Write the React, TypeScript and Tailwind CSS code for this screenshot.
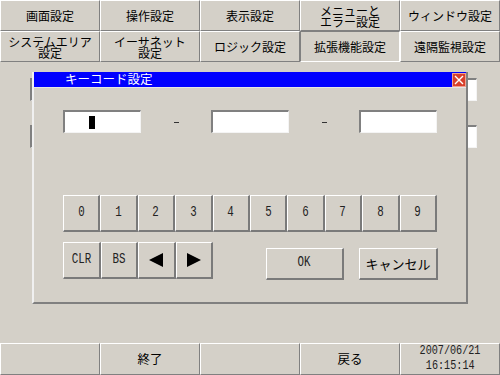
const jp = { fontFamily: '"Noto Sans CJK JP", "Noto Sans", sans-serif' };
const mono = { fontFamily: '"Liberation Mono", "DejaVu Sans Mono", monospace' };

const raised =
  "border border-t-white border-l-white border-r-[#808080] border-b-[#808080]";
const keyRaised =
  "border-t border-l border-b-2 border-r-2 border-t-white border-l-white border-r-[#7a7a7a] border-b-[#7a7a7a]";
const sunken =
  "border-t-2 border-l-2 border-b border-r border-t-[#808080] border-l-[#808080] border-b-[#f4f4f4] border-r-[#f4f4f4]";

const tabs1 = ["画面設定", "操作設定", "表示設定", "メニューと\nエラー設定", "ウィンドウ設定"];
const tabs2 = ["システムエリア\n設定", "イーサネット\n設定", "ロジック設定", "拡張機能設定", "遠隔監視設定"];

const Tab = ({ label, active }: { label: string; active?: boolean }) => (
  <div
    className={
      "flex items-center justify-center text-center whitespace-pre-line text-[12px] leading-[11px] text-black " +
      (active
        ? "border border-t-[#808080] border-l-[#808080] border-r-white border-b-white"
        : raised)
    }
    style={jp}
  >
    {label}
  </div>
);

const Digit = ({ children }: { children: React.ReactNode }) => (
  <span className="inline-block scale-x-[0.72] text-[15px] text-[#222]" style={mono}>
    {children}
  </span>
);

const Key = ({ children }: { children: React.ReactNode }) => (
  <div className={"flex items-center justify-center bg-[#d4d0c8] text-black " + keyRaised}>
    {children}
  </div>
);

const Tri = ({ dir }: { dir: "l" | "r" }) => (
  <svg width="14" height="14" viewBox="0 0 14 14">
    {dir === "l" ? (
      <polygon points="0,7 14,0 14,14" fill="#000" />
    ) : (
      <polygon points="14,7 0,0 0,14" fill="#000" />
    )}
  </svg>
);

const InputBox = ({ cursor }: { cursor?: boolean }) => (
  <div className={"w-[78px] h-[23px] bg-white flex items-center pl-[24px] " + sunken}>
    {cursor && <div className="w-[6px] h-[13px] bg-black" />}
  </div>
);

export default function App() {
  return (
    <div className="w-[500px] h-[375px] bg-[#d4d0c8] flex flex-col overflow-hidden select-none">
      {/* tabs */}
      <div className="grid grid-cols-5 grid-rows-[31px_31px]">
        {tabs1.map((t) => (
          <Tab key={t} label={t} />
        ))}
        {tabs2.map((t) => (
          <Tab key={t} label={t} active={t === "拡張機能設定"} />
        ))}
      </div>

      {/* content */}
      <div className="relative flex-1">
        <div className="flex flex-col gap-[24px] pt-[16px] pl-[30px] pr-[23px]">
          <div className={"h-[23px] bg-white " + sunken} />
          <div className={"h-[23px] bg-white " + sunken} />
        </div>

        {/* dialog */}
        <div className="absolute left-[32px] top-[10px] w-[436px] h-[232px] bg-[#d4d0c8] border-l-2 border-l-[#f0f0f0] border-r-2 border-r-[#808080] border-b-2 border-b-[#808080] flex flex-col">
          <div className="h-[16px] bg-[#0000ff] flex items-center justify-between border-b border-b-[#e6e6e6]">
            <span className="pl-[31px] text-white text-[12.5px] leading-none" style={jp}>
              キーコード設定
            </span>
            <div className="w-[14px] h-[14px] bg-[#d8402c] border border-[#f0a090] flex items-center justify-center">
              <svg width="10" height="10" viewBox="0 0 10 10">
                <path d="M1 1 L9 9 M9 1 L1 9" stroke="#fff" strokeWidth="1.4" />
              </svg>
            </div>
          </div>

          <div className="pl-[29px] pt-[22px]">
            <div className="flex items-center w-[374px]">
              <InputBox cursor />
              <div className="flex-1 flex justify-center">
                <div className="w-[5px] h-[1px] bg-[#333] mt-[1px]" />
              </div>
              <InputBox />
              <div className="flex-1 flex justify-center">
                <div className="w-[5px] h-[1px] bg-[#333] mt-[1px]" />
              </div>
              <InputBox />
            </div>

            <div className="grid grid-cols-10 w-[374px] h-[37px] mt-[62px]">
              {["0", "1", "2", "3", "4", "5", "6", "7", "8", "9"].map((d) => (
                <Key key={d}>
                  <Digit>{d}</Digit>
                </Key>
              ))}
            </div>

            <div className="flex w-[375px] mt-[10px]">
              <div className="grid grid-cols-4 w-[150px] h-[37px]">
                <Key>
                  <Digit>CLR</Digit>
                </Key>
                <Key>
                  <Digit>BS</Digit>
                </Key>
                <Key>
                  <Tri dir="l" />
                </Key>
                <Key>
                  <Tri dir="r" />
                </Key>
              </div>
              <div className="w-[78px] h-[32px] mt-[6px] ml-[53px] flex">
                <div className={"flex-1 flex items-center justify-center " + keyRaised}>
                  <Digit>OK</Digit>
                </div>
              </div>
              <div className="w-[79px] h-[32px] mt-[6px] ml-[15px] flex">
                <div
                  className={"flex-1 flex items-center justify-center text-[13px] text-black " + keyRaised}
                  style={jp}
                >
                  キャンセル
                </div>
              </div>
            </div>
          </div>
        </div>
      </div>

      {/* bottom bar */}
      <div className="grid grid-cols-5 h-[32px]">
        <div className={raised} />
        <div className={"flex items-center justify-center text-[12.5px] text-black " + raised} style={jp}>
          終了
        </div>
        <div className={raised} />
        <div className={"flex items-center justify-center text-[12.5px] text-black " + raised} style={jp}>
          戻る
        </div>
        <div className={"flex flex-col items-center justify-center text-[#222] " + raised}>
          <span className="block scale-x-[0.78] text-[13px] leading-[14.7px]" style={mono}>
            2007/06/21
          </span>
          <span className="block scale-x-[0.78] text-[13px] leading-[14.7px]" style={mono}>
            16:15:14
          </span>
        </div>
      </div>
    </div>
  );
}
